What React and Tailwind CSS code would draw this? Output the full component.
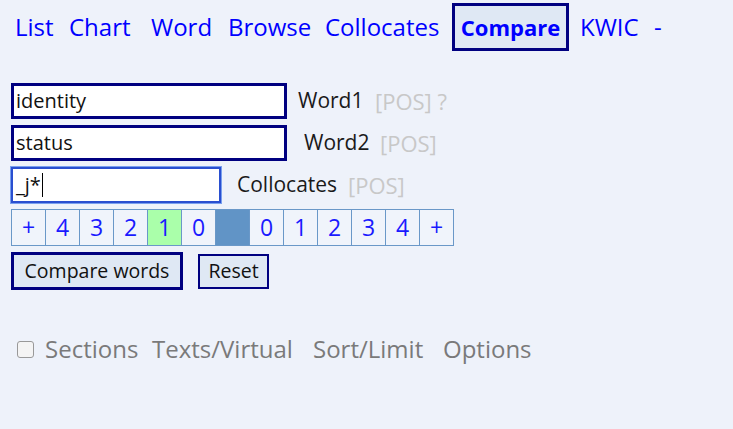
const navLinks = [
  { label: 'List', w: 'w-[54px]' },
  { label: 'Chart', w: 'w-[82px]' },
  { label: 'Word', w: 'w-[77px]' },
  { label: 'Browse', w: 'w-[97px]' },
  { label: 'Collocates', w: 'w-[127px]' },
];

const spanCells = ['+', '4', '3', '2', '1', '0', '', '0', '1', '2', '3', '4', '+'];

export default function App() {
  return (
    <div className="w-[733px] h-[429px] bg-[#eef2fa] font-['Open_Sans',sans-serif] overflow-hidden">
      {/* top menu */}
      <div className="flex items-center h-[52px] pt-[2px] pl-[15px] text-[24px] text-[#0000ff]">
        {navLinks.map((l) => (
          <span key={l.label} className={'shrink-0 ' + l.w}>{l.label}</span>
        ))}
        <span className="w-[117px] h-[48px] flex items-center justify-center border-[3px] border-[#000080] bg-[#dfe8f4] font-bold text-[22px]">
          Compare
        </span>
        <span className="ml-[11px] w-[74px]">KWIC</span>
        <span>-</span>
      </div>

      {/* word inputs */}
      <div className="mt-[31px] ml-[11px] flex flex-col gap-[6px] text-[21px] text-[#1a1a1a]">
        <div className="flex items-center">
          <div className="w-[276px] h-[36px] border-[3px] border-[#000080] bg-white px-[2px] flex items-center text-[20px] text-[#111]">identity</div>
          <span className="ml-[11px] w-[77px]">Word1</span>
          <span className="text-[22px] text-[#c8c8c8]">[POS] ?</span>
        </div>
        <div className="flex items-center">
          <div className="w-[276px] h-[36px] border-[3px] border-[#000080] bg-white px-[2px] flex items-center text-[20px] text-[#111]">status</div>
          <span className="ml-[17px] w-[76px]">Word2</span>
          <span className="text-[22px] text-[#c8c8c8]">[POS]</span>
        </div>
        <div className="flex items-center">
          <div className="w-[210px] h-[36px] border-[2px] border-[#2a4fd0] outline outline-1 outline-[#7aa0ee] bg-white px-[3px] flex items-center text-[20px] text-[#111]">
            _j*<span className="inline-block w-px h-[24px] bg-black ml-px" />
          </div>
          <span className="ml-[16px] w-[111px]">Collocates</span>
          <span className="text-[22px] text-[#c8c8c8]">[POS]</span>
        </div>
      </div>

      {/* span selector */}
      <div className="mt-[6px] ml-[11px] flex w-fit border-t border-l border-[#6a98c8] text-[23px] text-[#1a1aff]">
        {spanCells.map((c, i) => (
          <div
            key={i}
            className={
              'w-[34px] h-[36px] flex items-center justify-center border-r border-b border-[#6a98c8] ' +
              (i === 4 ? 'bg-[#aaffaa]' : i === 6 ? 'bg-[#6194c6]' : 'bg-[#f0f4fb]')
            }
          >
            {c}
          </div>
        ))}
      </div>

      {/* buttons */}
      <div className="mt-[6px] ml-[11px] flex items-center text-[19.5px] text-[#111]">
        <button className="h-[38px] w-[172px] border-[3px] border-[#000080] bg-[#dfe8f4]">Compare words</button>
        <button className="ml-[15px] h-[35px] w-[71px] border-[2px] border-[#000080] bg-[#dfe8f4]">Reset</button>
      </div>

      {/* bottom options */}
      <div className="mt-[41px] ml-[17px] flex items-center text-[24px] text-[#7a7a7a]">
        <span className="w-[17px] h-[17px] rounded-[3px] border border-[#999] bg-[#f4f4f4]" />
        <span className="ml-[11px] w-[107px]">Sections</span>
        <span className="w-[161px]">Texts/Virtual</span>
        <span className="w-[130px]">Sort/Limit</span>
        <span>Options</span>
      </div>
    </div>
  );
}
